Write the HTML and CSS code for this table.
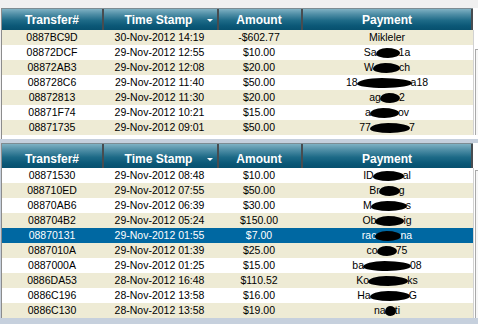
FILE: index.html
```html
<!DOCTYPE html>
<html>
<head>
<meta charset="utf-8">
<link rel="stylesheet" href="styles.css">
</head>
<body>
<div class="panel panel-top">
  <div class="grid">
    <table class="tx">
      <colgroup><col class="c1"><col class="c2"><col class="c3"><col class="c4"></colgroup>
      <thead>
        <tr><th>Transfer#</th><th class="sorted">Time Stamp<span class="arrow"></span></th><th>Amount</th><th class="last">Payment</th></tr>
      </thead>
      <tbody>
        <tr class="alt"><td>0887BC9D</td><td>30-Nov-2012 14:19</td><td>-$602.77</td><td>Mikleler</td></tr>
        <tr><td>08872DCF</td><td>29-Nov-2012 12:55</td><td>$10.00</td><td>Sa<i class="blot" style="--w:24px"></i>1a</td></tr>
        <tr class="alt"><td>08872AB3</td><td>29-Nov-2012 12:08</td><td>$20.00</td><td>W<i class="blot" style="--w:27px"></i>ch</td></tr>
        <tr><td>088728C6</td><td>29-Nov-2012 11:40</td><td>$50.00</td><td>18<i class="blot" style="--w:55px"></i>a18</td></tr>
        <tr class="alt"><td>08872813</td><td>29-Nov-2012 11:30</td><td>$20.00</td><td>ag<i class="blot" style="--w:20px"></i>2</td></tr>
        <tr><td>08871F74</td><td>29-Nov-2012 10:21</td><td>$15.00</td><td>a<i class="blot" style="--w:29px"></i>ov</td></tr>
        <tr class="alt"><td>08871735</td><td>29-Nov-2012 09:01</td><td>$50.00</td><td>77<i class="blot" style="--w:40px"></i>7</td></tr>
      </tbody>
    </table>
    <div class="vbar vbar-top"><div class="thumb thumb-top"></div></div>
  </div>
</div>
<div class="sep"></div>
<div class="panel panel-bottom">
  <div class="grid">
    <table class="tx">
      <colgroup><col class="c1"><col class="c2"><col class="c3"><col class="c4"></colgroup>
      <thead>
        <tr class="head2"><th>Transfer#</th><th class="sorted">Time Stamp<span class="arrow"></span></th><th>Amount</th><th class="last">Payment</th></tr>
      </thead>
      <tbody>
        <tr><td>08871530</td><td>29-Nov-2012 08:48</td><td>$10.00</td><td>ID<i class="blot" style="--w:31px"></i>al</td></tr>
        <tr class="alt"><td>088710ED</td><td>29-Nov-2012 07:55</td><td>$50.00</td><td>Br<i class="blot" style="--w:21px"></i>g</td></tr>
        <tr><td>08870AB6</td><td>29-Nov-2012 06:39</td><td>$30.00</td><td>M<i class="blot" style="--w:36px"></i>s</td></tr>
        <tr class="alt"><td>088704B2</td><td>29-Nov-2012 05:24</td><td>$150.00</td><td>Ob<i class="blot" style="--w:29px"></i>ig</td></tr>
        <tr class="sel"><td>08870131</td><td>29-Nov-2012 01:55</td><td>$7.00</td><td>rac<i class="blot" style="--w:26px"></i>na</td></tr>
        <tr class="alt"><td>0887010A</td><td>29-Nov-2012 01:39</td><td>$25.00</td><td>co<i class="blot" style="--w:20px"></i>75</td></tr>
        <tr><td>0887000A</td><td>29-Nov-2012 01:25</td><td>$15.00</td><td>ba<i class="blot" style="--w:48px"></i>08</td></tr>
        <tr class="alt"><td>0886DA53</td><td>28-Nov-2012 16:48</td><td>$110.52</td><td>Ko<i class="blot" style="--w:40px"></i>ks</td></tr>
        <tr><td>0886C196</td><td>28-Nov-2012 13:58</td><td>$16.00</td><td>Ha<i class="blot" style="--w:40px"></i>G</td></tr>
        <tr class="alt"><td>0886C130</td><td>28-Nov-2012 13:58</td><td>$19.00</td><td>na<i class="blot" style="--w:11px"></i>ti</td></tr>
      </tbody>
    </table>
    <div class="vbar vbar-bottom"><div class="thumb thumb-bottom"></div></div>
  </div>
</div>
</body>
</html>
```
FILE: styles.css
```css
html, body {
  margin: 0;
  padding: 0;
}
body {
  width: 478px;
  height: 324px;
  overflow: hidden;
  background: #c6d0dd;
  font-family: "Liberation Sans", Arial, sans-serif;
}
.panel-top {
  background: #f0f0f0;
  padding-top: 8px;
}
.grid {
  display: flex;
  margin-left: 1px;
  border-left: 1px solid #8c8c8c;
  background: #ffffff;
}
.panel-top .grid {
  padding-bottom: 4px;
}
.sep {
  height: 4px;
  background: #c6d0dd;
}
.tx {
  width: 471px;
  table-layout: fixed;
  border-collapse: separate;
  border-spacing: 0;
}
.c1 { width: 100px; }
.c2 { width: 115px; }
.c3 { width: 84px; }
.c4 { width: 172px; }

.tx th {
  position: relative;
  padding: 4px 0 3px;
  height: 14px;
  line-height: 14px;
  font-size: 12px;
  font-weight: bold;
  color: #ffffff;
  text-align: center;
  white-space: nowrap;
  border-top: 1px solid #7d8c93;
  background: linear-gradient(#7fb1c3 0%, #4f8ea6 25%, #1d6a87 55%, #0b5877 80%, #07506e 100%);
}
.tx .head2 th {
  padding: 8px 0 2px;
}
.tx th + th {
  box-shadow: inset 2px 0 #474c50;
}
.tx th.last {
  box-shadow: inset 2px 0 #474c50, inset -2px 0 #474c50;
}
.tx th.sorted {
  padding-right: 2px;
}
.arrow {
  position: absolute;
  right: 4px;
  bottom: 8px;
  width: 0;
  height: 0;
  border-left: 3px solid transparent;
  border-right: 3px solid transparent;
  border-top: 3px solid #ffffff;
}
.tx .head2 .arrow {
  bottom: 7px;
}
.tx td {
  height: 15px;
  padding: 0;
  line-height: 15px;
  font-size: 10.5px;
  color: #000000;
  text-align: center;
  white-space: nowrap;
  overflow: hidden;
}
.tx tr.alt td {
  background: #eeebd5;
}
.tx tr.sel td {
  background: #0068a2;
  color: #ffffff;
}
.blot {
  display: inline-block;
  width: var(--w);
  height: 10px;
  margin: 0 -1px;
  vertical-align: -2px;
  background: #000000;
  border-radius: 45% 55% 50% 50% / 60% 50% 50% 40%;
}
.vbar {
  width: 4px;
  border-left: 1px solid #d2d2d2;
  background: #ffffff;
}
.vbar-top {
  margin-top: 22px;
}
.vbar-bottom {
  margin-top: 25px;
}
.thumb {
  margin-left: 1px;
  height: 100%;
  border-left: 1px solid #a9a9a9;
  border-top: 1px solid #a9a9a9;
  background: #f7f7f7;
  box-sizing: border-box;
}
.thumb-top {
  margin-top: 19px;
  height: 86px;
}
.thumb-bottom {
  margin-top: 2px;
  height: 148px;
}
```
